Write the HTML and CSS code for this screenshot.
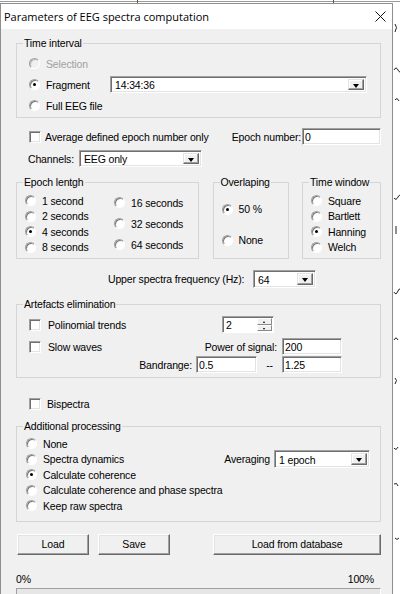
FILE: index.html
```html
<!DOCTYPE html>
<html>
<head>
  <meta charset="utf-8">
  <title>Parameters of EEG spectra computation</title>
  <link rel="stylesheet" href="styles.css">
</head>
<body>
<svg class="backdrop" width="400" height="594" viewBox="0 0 400 594">
  <path d="M0 1.5H400" stroke="#9a9a9a"/>
  <path d="M137.5 0V3M333.5 0V3" stroke="#555"/>
  <path d="M395 24q3 3 0 8M394 70q2 -4 4 0t4 0M395 100q2 -3 4 1M394 198q2 3 4 -1t3 1M396 226v8M394 292q2 4 4 -1t3 2M394 340q2 -4 4 0M395 378q3 2 0 6M394 448q2 3 4 -1M394 484q3 -2 4 2M395 538q2 3 4 0" stroke="#222" fill="none"/>
</svg>

<div class="dlg">
  <div class="dlg__title">
    <span class="dlg__caption">Parameters of EEG spectra computation</span>
    <svg class="dlg__close" width="11" height="11" viewBox="0 0 11 11">
      <path d="M0.5 0.5L10.5 10.5M10.5 0.5L0.5 10.5" stroke="#111" stroke-width="1"/>
    </svg>
  </div>

  <div class="dlg__body">
    <fieldset class="grp grp_time">
      <legend>Time interval</legend>
      <div class="opt opt_disabled"><span class="radio"></span>Selection</div>
      <div class="line">
        <div class="opt opt_frag"><span class="radio radio_on"></span>Fragment</div>
        <div class="combo combo_frag"><span class="combo__text">14:34:36</span><span class="combo__btn"></span></div>
      </div>
      <div class="opt"><span class="radio"></span>Full EEG file</div>
    </fieldset>

    <div class="line line_avg">
      <span class="check"></span><span class="cap">Average defined epoch number only</span>
      <span class="lbl lbl_epoch">Epoch number:</span>
      <input class="field field_epoch" type="text" value="0">
    </div>

    <div class="line line_chan">
      <span class="lbl lbl_chan">Channels:</span>
      <div class="combo combo_chan"><span class="combo__text">EEG only</span><span class="combo__btn"></span></div>
    </div>

    <div class="groups">
      <fieldset class="grp grp_epoch">
        <legend>Epoch lentgh</legend>
        <div class="cols">
          <div class="col col_tight">
            <div class="opt"><span class="radio"></span>1 second</div>
            <div class="opt"><span class="radio"></span>2 seconds</div>
            <div class="opt"><span class="radio radio_on"></span>4 seconds</div>
            <div class="opt"><span class="radio"></span>8 seconds</div>
          </div>
          <div class="col col_wide">
            <div class="opt"><span class="radio"></span>16 seconds</div>
            <div class="opt"><span class="radio"></span>32 seconds</div>
            <div class="opt"><span class="radio"></span>64 seconds</div>
          </div>
        </div>
      </fieldset>
      <fieldset class="grp grp_overlap">
        <legend>Overlaping</legend>
        <div class="opt opt_half"><span class="radio radio_on"></span>50 %</div>
        <div class="opt opt_none"><span class="radio"></span>None</div>
      </fieldset>
      <fieldset class="grp grp_window">
        <legend>Time window</legend>
        <div class="col col_tight">
          <div class="opt"><span class="radio"></span>Square</div>
          <div class="opt"><span class="radio"></span>Bartlett</div>
          <div class="opt"><span class="radio radio_on"></span>Hanning</div>
          <div class="opt"><span class="radio"></span>Welch</div>
        </div>
      </fieldset>
    </div>

    <div class="line line_freq">
      <span class="lbl lbl_freq">Upper spectra frequency (Hz):</span>
      <div class="combo combo_freq"><span class="combo__text">64</span><span class="combo__btn"></span></div>
    </div>

    <fieldset class="grp grp_art">
      <legend>Artefacts elimination</legend>
      <div class="art">
        <div class="art__check art__r1"><span class="check"></span><span class="cap">Polinomial trends</span></div>
        <div class="spin art__spin">
          <span class="spin__text">2</span>
          <span class="spin__btns"><span class="spin__up"></span><span class="spin__down"></span></span>
        </div>
        <div class="art__check art__r2"><span class="check"></span><span class="cap">Slow waves</span></div>
        <span class="lbl art__power">Power of signal:</span>
        <input class="field art__in2" type="text" value="200">
        <span class="lbl art__band">Bandrange:</span>
        <input class="field art__in3a" type="text" value="0.5">
        <span class="art__dash">--</span>
        <input class="field art__in3b" type="text" value="1.25">
      </div>
    </fieldset>

    <div class="line line_bisp">
      <span class="check"></span><span class="cap">Bispectra</span>
    </div>

    <fieldset class="grp grp_add">
      <legend>Additional processing</legend>
      <div class="add">
        <div class="opt"><span class="radio"></span>None</div>
        <div class="opt"><span class="radio"></span>Spectra dynamics</div>
        <div class="opt"><span class="radio radio_on"></span>Calculate coherence</div>
        <div class="opt"><span class="radio"></span>Calculate coherence and phase spectra</div>
        <div class="opt"><span class="radio"></span>Keep raw spectra</div>
        <div class="add__avg">
          <span class="lbl">Averaging</span>
          <div class="combo combo_avg"><span class="combo__text">1 epoch</span><span class="combo__btn"></span></div>
        </div>
      </div>
    </fieldset>

    <div class="buttons">
      <button class="btn btn_small">Load</button>
      <button class="btn btn_small">Save</button>
      <button class="btn btn_db">Load from database</button>
    </div>

    <div class="progress__labels">
      <span>0%</span>
      <span>100%</span>
    </div>
    <div class="progress"></div>
  </div>
</div>
</body>
</html>
```

FILE: styles.css
```css
body {
    margin: 0;
    width: 400px;
    height: 594px;
    overflow: hidden;
    position: relative;
    background: #fff;
    color: #000;
    font: 10.5px "Liberation Sans", Arial, sans-serif;
    letter-spacing: -0.15px;
  }
.backdrop {
    position: absolute;
    left: 0;
    top: 0;
  }
.dlg {
    position: relative;
    box-sizing: border-box;
    width: 393px;
    height: 591px;
    margin-top: 3px;
    border: 1px solid #8f8f8f;
    border-bottom: 0;
    background: #f0f0f0;
  }
.dlg__title {
    display: flex;
    align-items: center;
    justify-content: space-between;
    height: 25px;
    padding: 0 6px 0 3px;
    background: #fff;
  }
.dlg__caption {
    font: 11px "Open Sans", "Noto Sans", sans-serif;
    letter-spacing: 0;
  }
.dlg__body {
    padding: 0 11px 0 15px;
  }

/* group boxes */
.grp {
    margin: 0;
    min-width: 0;
    border: 1px solid #d5d5d5;
  }
.grp legend {
    padding: 0 1px;
    line-height: 13px;
    white-space: nowrap;
  }
.grp_time {
    margin-top: 8px;
    padding: 3px 13px 1px 12px;
  }
.grp_time legend,
.grp_art legend {
    margin-left: -6px;
  }

/* radio, checkbox */
.opt {
    display: flex;
    align-items: center;
    height: 21px;
    white-space: nowrap;
  }
.opt_disabled {
    color: #a0a0a0;
  }
.radio {
    position: relative;
    flex: none;
    box-sizing: border-box;
    width: 11px;
    height: 11px;
    margin-right: 6px;
    border-radius: 50%;
    border: 1px solid;
    border-color: #a0a0a0 #fff #fff #a0a0a0;
    box-shadow: inset 1px 1px 0 #7a7a7a;
    background: #fff;
  }
.opt_disabled .radio {
    background: #f0f0f0;
    box-shadow: inset 1px 1px 0 #b8b8b8;
  }
.radio_on:after {
    content: "";
    position: absolute;
    left: 3px;
    top: 3px;
    width: 3px;
    height: 3px;
    border-radius: 50%;
    background: #000;
  }
.check {
    flex: none;
    box-sizing: border-box;
    width: 12px;
    height: 12px;
    margin-right: 5px;
    border: 1px solid;
    border-color: #a0a0a0 #fff #fff #a0a0a0;
    box-shadow: inset 1px 1px 0 #6f6f6f, inset -1px -1px 0 #e3e3e3;
    background: #fff;
  }

/* edit, combo */
.field {
    box-sizing: border-box;
    height: 17px;
    margin: 0;
    padding: 0 2px;
    font: inherit;
    letter-spacing: inherit;
    border: 1px solid;
    border-color: #a0a0a0 #fff #fff #a0a0a0;
    box-shadow: inset 1px 1px 0 #6f6f6f, inset -1px -1px 0 #e3e3e3;
    background: #fff;
    outline: none;
  }
.combo {
    box-sizing: border-box;
    display: flex;
    align-items: center;
    height: 17px;
    padding: 2px;
    border: 1px solid;
    border-color: #a0a0a0 #fff #fff #a0a0a0;
    box-shadow: inset 1px 1px 0 #6f6f6f, inset -1px -1px 0 #e3e3e3;
    background: #fff;
  }
.combo__text {
    flex: 1;
    padding-left: 2px;
    padding-top: 1px;
  }
.combo__btn {
    position: relative;
    box-sizing: border-box;
    width: 16px;
    height: 100%;
    border: 1px solid;
    border-color: #e3e3e3 #696969 #696969 #e3e3e3;
    box-shadow: inset -1px -1px 0 #a0a0a0, inset 1px 1px 0 #fff;
    background: #f0f0f0;
  }
.combo__btn:after {
    content: "";
    position: absolute;
    left: 4px;
    top: 4px;
    border: 3.5px solid transparent;
    border-top: 4px solid #000;
    border-bottom: 0;
  }
.line {
    display: flex;
    align-items: center;
    white-space: nowrap;
  }
.opt_frag {
    width: 81px;
  }
.combo_frag {
    width: 257px;
  }
.line_avg {
    height: 17px;
    margin-top: 10px;
    padding-left: 13px;
  }
.line_avg .check {
    margin-right: 4px;
  }
.lbl_epoch {
    margin-left: auto;
    margin-right: 1px;
  }
.field_epoch {
    width: 79px;
  }
.line_chan {
    height: 17px;
    margin-top: 5px;
    padding-left: 12px;
  }
.lbl_chan {
    width: 51px;
  }
.combo_chan {
    width: 123px;
  }

/* epoch / overlaping / window */
.groups {
    display: flex;
    justify-content: space-between;
    margin-top: 9px;
  }
.grp_epoch,
.grp_overlap,
.grp_window {
    box-sizing: border-box;
    padding: 3px 2px 3px 8px;
  }
.grp_epoch legend,
.grp_overlap legend,
.grp_window legend {
    margin-left: -2px;
  }
.grp_epoch {
    width: 183px;
  }
.grp_overlap {
    width: 76px;
  }
.grp_window {
    width: 79px;
  }
.cols {
    display: flex;
  }
.col_tight {
    margin-top: 1px;
    width: 89px;
  }
.col_tight .opt {
    height: 15.5px;
  }
.col_wide .opt {
    height: 21px;
  }
.opt_half {
    height: 16px;
    margin-top: 9px;
  }
.opt_none {
    height: 16px;
    margin-top: 15px;
  }

.line_freq {
    height: 18px;
    margin-top: 11px;
    padding-left: 92px;
  }
.lbl_freq {
    width: 145px;
  }
.combo_freq {
    width: 63px;
    height: 18px;
  }

/* artefacts */
.grp_art {
    margin-top: 10px;
    padding: 5px 4px 4px 12px;
  }
.art {
    display: grid;
    grid-template-columns: 167px 61px 25px 60px;
    grid-template-rows: 17px 22px 18px;
    align-items: end;
  }
.art__check {
    display: flex;
    align-items: center;
    height: 17px;
    grid-column: 1;
  }
.art__check .cap {
    margin-left: 2px;
  }
.art__r1 {
    grid-row: 1;
  }
.art__r2 {
    grid-row: 2;
  }
.art__spin {
    grid-row: 1;
    grid-column: 2 / 4;
    margin-left: 26px;
  }
.art__power {
    grid-row: 2;
    grid-column: 2 / 4;
    justify-self: end;
    align-self: end;
    margin: 0 5px 2px 0;
  }
.art__in2 {
    grid-row: 2;
    grid-column: 4;
    width: 60px;
  }
.art__band {
    grid-row: 3;
    grid-column: 1;
    justify-self: end;
    margin: 0 4px 2px 0;
  }
.art__in3a {
    grid-row: 3;
    grid-column: 2;
    width: 61px;
  }
.art__dash {
    grid-row: 3;
    grid-column: 3;
    text-align: center;
    margin-bottom: 2px;
  }
.art__in3b {
    grid-row: 3;
    grid-column: 4;
    width: 60px;
  }
.spin {
    box-sizing: border-box;
    display: flex;
    width: 52px;
    height: 17px;
    padding: 1px;
    border: 1px solid;
    border-color: #a0a0a0 #fff #fff #a0a0a0;
    box-shadow: inset 1px 1px 0 #6f6f6f;
    background: #fff;
  }
.spin__text {
    flex: 1;
    padding-left: 2px;
    line-height: 14px;
  }
.spin__btns {
    display: flex;
    flex-direction: column;
    width: 15px;
  }
.spin__up,
.spin__down {
    position: relative;
    flex: 1;
    box-sizing: border-box;
    border: 1px solid;
    border-color: #fff #8a8a8a #8a8a8a #fff;
    background: #f0f0f0;
  }
.spin__up:after,
.spin__down:after {
    content: "";
    position: absolute;
    left: 5px;
    top: 2px;
    border: 1.5px solid transparent;
  }
.spin__up:after {
    border-bottom: 2px solid #000;
    border-top: 0;
  }
.spin__down:after {
    border-top: 2px solid #000;
    border-bottom: 0;
  }

.line_bisp {
    height: 14px;
    margin-top: 19px;
    padding-left: 13px;
  }
.line_bisp .check {
    margin-right: 6px;
  }

/* additional processing */
.grp_add {
    margin-top: 9px;
    padding: 3px 10px 7px 9px;
  }
.grp_add legend {
    margin-left: -3px;
  }
.add {
    display: grid;
    grid-template-columns: 1fr auto;
    grid-template-rows: repeat(5, 15.5px);
  }
.add .opt {
    grid-column: 1;
    height: 15.5px;
  }
.add__avg {
    grid-row: 2;
    grid-column: 2;
    display: flex;
    align-items: center;
    align-self: center;
  }
.add__avg .lbl {
    margin-right: 4px;
  }
.combo_avg {
    width: 96px;
    height: 18px;
  }

/* buttons */
.buttons {
    display: flex;
    margin-top: 12px;
    padding-left: 1px;
  }
.btn {
    box-sizing: border-box;
    height: 21px;
    margin: 0;
    padding: 0;
    font: inherit;
    letter-spacing: inherit;
    color: #000;
    border: 1px solid;
    border-color: #fff #696969 #696969 #fff;
    box-shadow: inset -1px -1px 0 #a0a0a0, inset 1px 1px 0 #e3e3e3;
    background: #f0f0f0;
  }
.btn_small {
    width: 72px;
    margin-right: 9px;
  }
.btn_db {
    width: 168px;
    margin-left: auto;
  }
.progress__labels {
    display: flex;
    justify-content: space-between;
    height: 13px;
    line-height: 13px;
    margin-top: 18px;
    padding-right: 7px;
  }
.progress {
    box-sizing: border-box;
    height: 20px;
    margin-top: 2px;
    border: 1px solid;
    border-color: #a0a0a0 #fff #fff #a0a0a0;
    background: #e6e6e6;
  }
```
